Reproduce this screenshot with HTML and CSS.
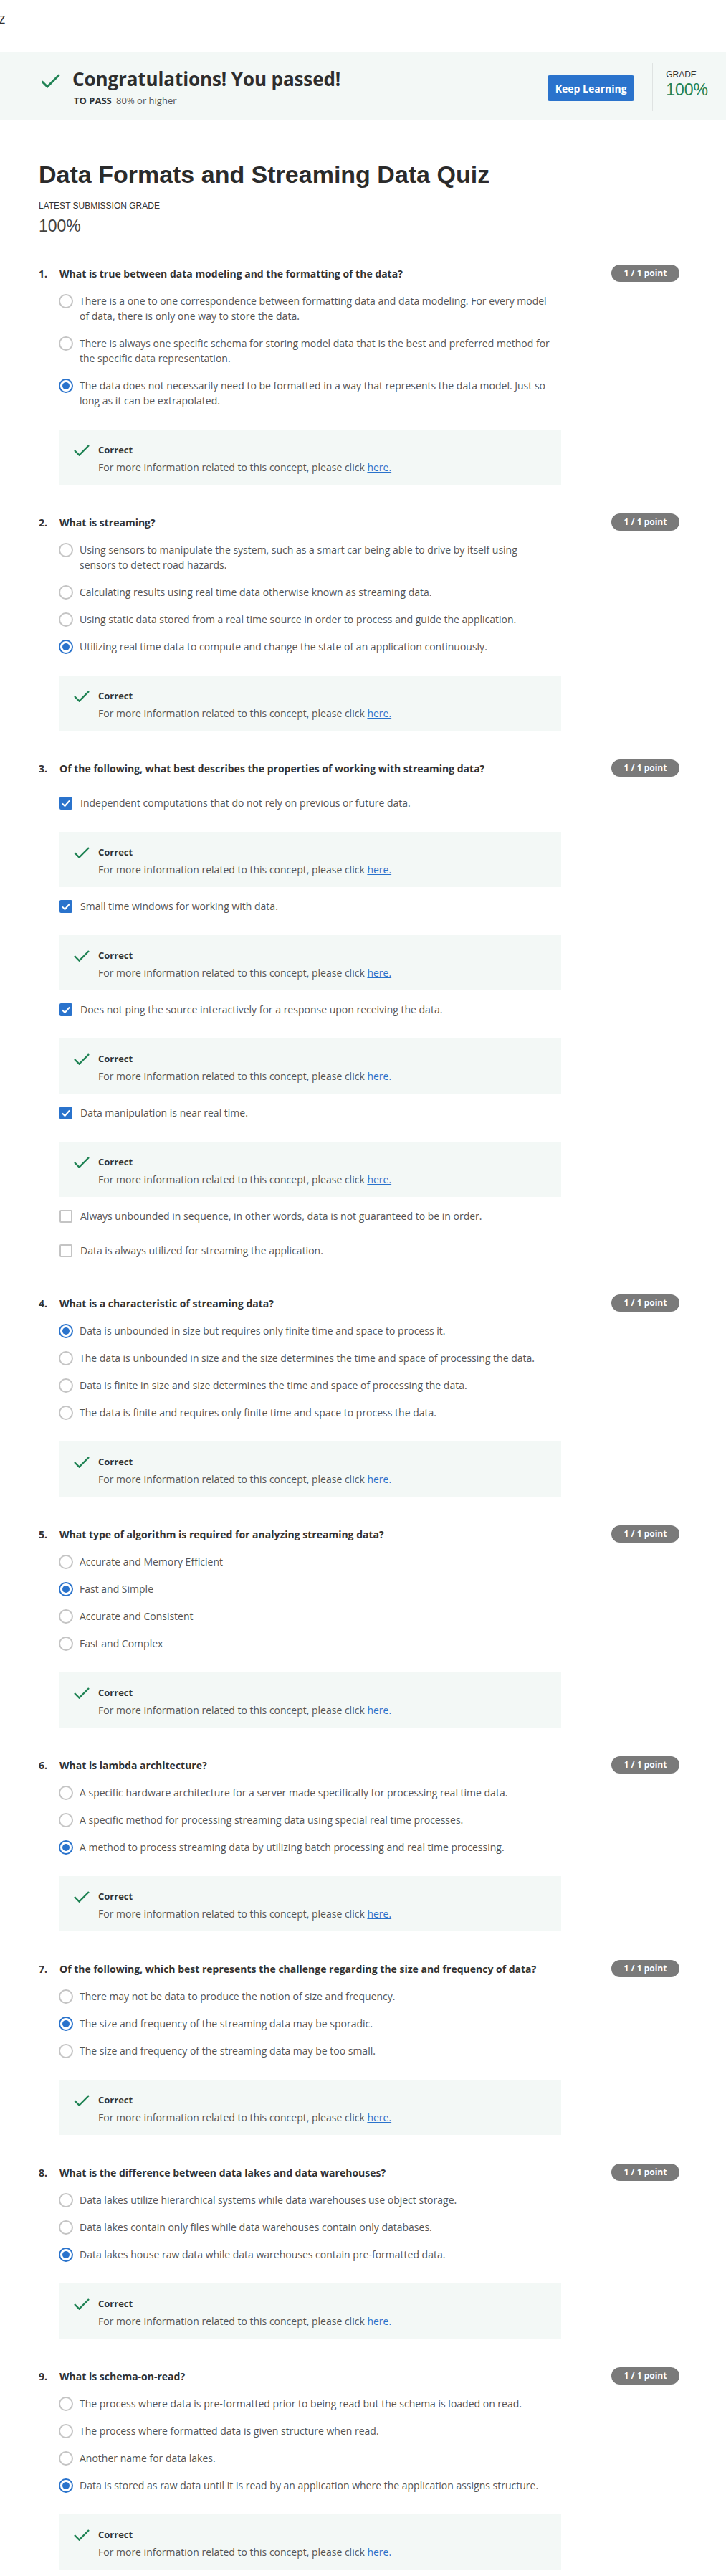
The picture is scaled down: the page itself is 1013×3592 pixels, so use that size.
FILE: index.html
```html
<!DOCTYPE html>
<html lang="en">
<head>
<meta charset="utf-8">
<title>Data Formats and Streaming Data Quiz</title>
<link rel="stylesheet" href="styles.css">
</head>
<body>
<div class="topbar"><span class="crumb">z</span></div>

<section class="banner">
  <div class="pass">
    <svg class="pass-icon" viewBox="0 0 27 20" width="27" height="20" aria-hidden="true"><polyline points="1.5,10.5 9,18 25.5,1.5" fill="none" stroke="#1f8354" stroke-width="3"/></svg>
    <div class="pass-text">
      <h2 class="pass-title">Congratulations! You passed!</h2>
      <p class="pass-req"><b>TO PASS</b> 80% or higher</p>
    </div>
  </div>
  <div class="banner-actions">
    <button class="keep" type="button">Keep Learning</button>
    <div class="grade">
      <span class="grade-label">GRADE</span>
      <span class="grade-value">100%</span>
    </div>
  </div>
</section>

<main class="content">
  <h1 class="quiz-title">Data Formats and Streaming Data Quiz</h1>
  <div class="latest-label">LATEST SUBMISSION GRADE</div>
  <div class="latest-value">100%</div>
  <hr class="divider">

  <ol class="questions">
    <li class="question">
      <div class="q-head"><span class="q-num">1.</span><span class="q-text">What is true between data modeling and the formatting of the data?</span><span class="badge">1 / 1 point</span></div>
      <div class="options">
        <div class="option"><span class="radio"></span><span class="opt-text">There is a one to one correspondence between formatting data and data modeling. For every model of data, there is only one way to store the data.</span></div>
        <div class="option"><span class="radio"></span><span class="opt-text">There is always one specific schema for storing model data that is the best and preferred method for the specific data representation.</span></div>
        <div class="option"><span class="radio on"></span><span class="opt-text">The data does not necessarily need to be formatted in a way that represents the data model. Just so long as it can be extrapolated.</span></div>
        <div class="feedback">
          <svg class="fb-icon" viewBox="0 0 22 16" width="22" height="16" aria-hidden="true"><polyline points="1,8 7.5,14.5 21,1" fill="none" stroke="#1f8354" stroke-width="2.4"/></svg>
          <div class="fb-title">Correct</div>
          <div class="fb-text">For more information related to this concept, please click <a href="#">here.</a></div>
        </div>
      </div>
    </li>

    <li class="question">
      <div class="q-head"><span class="q-num">2.</span><span class="q-text">What is streaming?</span><span class="badge">1 / 1 point</span></div>
      <div class="options">
        <div class="option"><span class="radio"></span><span class="opt-text">Using sensors to manipulate the system, such as a smart car being able to drive by itself using sensors to detect road hazards.</span></div>
        <div class="option"><span class="radio"></span><span class="opt-text">Calculating results using real time data otherwise known as streaming data.</span></div>
        <div class="option"><span class="radio"></span><span class="opt-text">Using static data stored from a real time source in order to process and guide the application.</span></div>
        <div class="option"><span class="radio on"></span><span class="opt-text">Utilizing real time data to compute and change the state of an application continuously.</span></div>
        <div class="feedback">
          <svg class="fb-icon" viewBox="0 0 22 16" width="22" height="16" aria-hidden="true"><polyline points="1,8 7.5,14.5 21,1" fill="none" stroke="#1f8354" stroke-width="2.4"/></svg>
          <div class="fb-title">Correct</div>
          <div class="fb-text">For more information related to this concept, please click <a href="#">here.</a></div>
        </div>
      </div>
    </li>

    <li class="question">
      <div class="q-head"><span class="q-num">3.</span><span class="q-text">Of the following, what best describes the properties of working with streaming data?</span><span class="badge">1 / 1 point</span></div>
      <div class="options">
        <div class="option check"><span class="checkbox on"><svg viewBox="0 0 18 18" width="18" height="18" aria-hidden="true"><polyline points="4,9.5 7.5,13 14,5.5" fill="none" stroke="#fff" stroke-width="2"/></svg></span><span class="opt-text">Independent computations that do not rely on previous or future data.</span></div>
        <div class="feedback">
          <svg class="fb-icon" viewBox="0 0 22 16" width="22" height="16" aria-hidden="true"><polyline points="1,8 7.5,14.5 21,1" fill="none" stroke="#1f8354" stroke-width="2.4"/></svg>
          <div class="fb-title">Correct</div>
          <div class="fb-text">For more information related to this concept, please click <a href="#">here.</a></div>
        </div>
        <div class="option check"><span class="checkbox on"><svg viewBox="0 0 18 18" width="18" height="18" aria-hidden="true"><polyline points="4,9.5 7.5,13 14,5.5" fill="none" stroke="#fff" stroke-width="2"/></svg></span><span class="opt-text">Small time windows for working with data.</span></div>
        <div class="feedback">
          <svg class="fb-icon" viewBox="0 0 22 16" width="22" height="16" aria-hidden="true"><polyline points="1,8 7.5,14.5 21,1" fill="none" stroke="#1f8354" stroke-width="2.4"/></svg>
          <div class="fb-title">Correct</div>
          <div class="fb-text">For more information related to this concept, please click <a href="#">here.</a></div>
        </div>
        <div class="option check"><span class="checkbox on"><svg viewBox="0 0 18 18" width="18" height="18" aria-hidden="true"><polyline points="4,9.5 7.5,13 14,5.5" fill="none" stroke="#fff" stroke-width="2"/></svg></span><span class="opt-text">Does not ping the source interactively for a response upon receiving the data.</span></div>
        <div class="feedback">
          <svg class="fb-icon" viewBox="0 0 22 16" width="22" height="16" aria-hidden="true"><polyline points="1,8 7.5,14.5 21,1" fill="none" stroke="#1f8354" stroke-width="2.4"/></svg>
          <div class="fb-title">Correct</div>
          <div class="fb-text">For more information related to this concept, please click <a href="#">here.</a></div>
        </div>
        <div class="option check"><span class="checkbox on"><svg viewBox="0 0 18 18" width="18" height="18" aria-hidden="true"><polyline points="4,9.5 7.5,13 14,5.5" fill="none" stroke="#fff" stroke-width="2"/></svg></span><span class="opt-text">Data manipulation is near real time.</span></div>
        <div class="feedback">
          <svg class="fb-icon" viewBox="0 0 22 16" width="22" height="16" aria-hidden="true"><polyline points="1,8 7.5,14.5 21,1" fill="none" stroke="#1f8354" stroke-width="2.4"/></svg>
          <div class="fb-title">Correct</div>
          <div class="fb-text">For more information related to this concept, please click <a href="#">here.</a></div>
        </div>
        <div class="option check"><span class="checkbox"></span><span class="opt-text">Always unbounded in sequence, in other words, data is not guaranteed to be in order.</span></div>
        <div class="option check"><span class="checkbox"></span><span class="opt-text">Data is always utilized for streaming the application.</span></div>
      </div>
    </li>

    <li class="question">
      <div class="q-head"><span class="q-num">4.</span><span class="q-text">What is a characteristic of streaming data?</span><span class="badge">1 / 1 point</span></div>
      <div class="options">
        <div class="option"><span class="radio on"></span><span class="opt-text">Data is unbounded in size but requires only finite time and space to process it.</span></div>
        <div class="option"><span class="radio"></span><span class="opt-text">The data is unbounded in size and the size determines the time and space of processing the data.</span></div>
        <div class="option"><span class="radio"></span><span class="opt-text">Data is finite in size and size determines the time and space of processing the data.</span></div>
        <div class="option"><span class="radio"></span><span class="opt-text">The data is finite and requires only finite time and space to process the data.</span></div>
        <div class="feedback">
          <svg class="fb-icon" viewBox="0 0 22 16" width="22" height="16" aria-hidden="true"><polyline points="1,8 7.5,14.5 21,1" fill="none" stroke="#1f8354" stroke-width="2.4"/></svg>
          <div class="fb-title">Correct</div>
          <div class="fb-text">For more information related to this concept, please click <a href="#">here.</a></div>
        </div>
      </div>
    </li>

    <li class="question">
      <div class="q-head"><span class="q-num">5.</span><span class="q-text">What type of algorithm is required for analyzing streaming data?</span><span class="badge">1 / 1 point</span></div>
      <div class="options">
        <div class="option"><span class="radio"></span><span class="opt-text">Accurate and Memory Efficient</span></div>
        <div class="option"><span class="radio on"></span><span class="opt-text">Fast and Simple</span></div>
        <div class="option"><span class="radio"></span><span class="opt-text">Accurate and Consistent</span></div>
        <div class="option"><span class="radio"></span><span class="opt-text">Fast and Complex</span></div>
        <div class="feedback">
          <svg class="fb-icon" viewBox="0 0 22 16" width="22" height="16" aria-hidden="true"><polyline points="1,8 7.5,14.5 21,1" fill="none" stroke="#1f8354" stroke-width="2.4"/></svg>
          <div class="fb-title">Correct</div>
          <div class="fb-text">For more information related to this concept, please click <a href="#">here.</a></div>
        </div>
      </div>
    </li>

    <li class="question">
      <div class="q-head"><span class="q-num">6.</span><span class="q-text">What is lambda architecture?</span><span class="badge">1 / 1 point</span></div>
      <div class="options">
        <div class="option"><span class="radio"></span><span class="opt-text">A specific hardware architecture for a server made specifically for processing real time data.</span></div>
        <div class="option"><span class="radio"></span><span class="opt-text">A specific method for processing streaming data using special real time processes.</span></div>
        <div class="option"><span class="radio on"></span><span class="opt-text">A method to process streaming data by utilizing batch processing and real time processing.</span></div>
        <div class="feedback">
          <svg class="fb-icon" viewBox="0 0 22 16" width="22" height="16" aria-hidden="true"><polyline points="1,8 7.5,14.5 21,1" fill="none" stroke="#1f8354" stroke-width="2.4"/></svg>
          <div class="fb-title">Correct</div>
          <div class="fb-text">For more information related to this concept, please click <a href="#">here.</a></div>
        </div>
      </div>
    </li>

    <li class="question">
      <div class="q-head"><span class="q-num">7.</span><span class="q-text">Of the following, which best represents the challenge regarding the size and frequency of data?</span><span class="badge">1 / 1 point</span></div>
      <div class="options">
        <div class="option"><span class="radio"></span><span class="opt-text">There may not be data to produce the notion of size and frequency.</span></div>
        <div class="option"><span class="radio on"></span><span class="opt-text">The size and frequency of the streaming data may be sporadic.</span></div>
        <div class="option"><span class="radio"></span><span class="opt-text">The size and frequency of the streaming data may be too small.</span></div>
        <div class="feedback">
          <svg class="fb-icon" viewBox="0 0 22 16" width="22" height="16" aria-hidden="true"><polyline points="1,8 7.5,14.5 21,1" fill="none" stroke="#1f8354" stroke-width="2.4"/></svg>
          <div class="fb-title">Correct</div>
          <div class="fb-text">For more information related to this concept, please click <a href="#">here.</a></div>
        </div>
      </div>
    </li>

    <li class="question">
      <div class="q-head"><span class="q-num">8.</span><span class="q-text">What is the difference between data lakes and data warehouses?</span><span class="badge">1 / 1 point</span></div>
      <div class="options">
        <div class="option"><span class="radio"></span><span class="opt-text">Data lakes utilize hierarchical systems while data warehouses use object storage.</span></div>
        <div class="option"><span class="radio"></span><span class="opt-text">Data lakes contain only files while data warehouses contain only databases.</span></div>
        <div class="option"><span class="radio on"></span><span class="opt-text">Data lakes house raw data while data warehouses contain pre-formatted data.</span></div>
        <div class="feedback">
          <svg class="fb-icon" viewBox="0 0 22 16" width="22" height="16" aria-hidden="true"><polyline points="1,8 7.5,14.5 21,1" fill="none" stroke="#1f8354" stroke-width="2.4"/></svg>
          <div class="fb-title">Correct</div>
          <div class="fb-text">For more information related to this concept, please click<a href="#"> here.</a></div>
        </div>
      </div>
    </li>

    <li class="question">
      <div class="q-head"><span class="q-num">9.</span><span class="q-text">What is schema-on-read?</span><span class="badge">1 / 1 point</span></div>
      <div class="options">
        <div class="option"><span class="radio"></span><span class="opt-text">The process where data is pre-formatted prior to being read but the schema is loaded on read.</span></div>
        <div class="option"><span class="radio"></span><span class="opt-text">The process where formatted data is given structure when read.</span></div>
        <div class="option"><span class="radio"></span><span class="opt-text">Another name for data lakes.</span></div>
        <div class="option"><span class="radio on"></span><span class="opt-text">Data is stored as raw data until it is read by an application where the application assigns structure.</span></div>
        <div class="feedback">
          <svg class="fb-icon" viewBox="0 0 22 16" width="22" height="16" aria-hidden="true"><polyline points="1,8 7.5,14.5 21,1" fill="none" stroke="#1f8354" stroke-width="2.4"/></svg>
          <div class="fb-title">Correct</div>
          <div class="fb-text">For more information related to this concept, please click<a href="#"> here.</a></div>
        </div>
      </div>
    </li>
  </ol>
</main>
</body>
</html>
```

FILE: styles.css
```css
html, body {
  margin: 0;
  padding: 0;
  background: #fff;
}

body {
  font-family: "Open Sans", "Liberation Sans", sans-serif;
  color: #333;
}

/* top bar */
.topbar {
  height: 73px;
  box-sizing: border-box;
  border-bottom: 1px solid #c9c9c9;
  padding-top: 12px;
}

.crumb {
  display: block;
  font-size: 20px;
  line-height: 28px;
  color: #333;
  margin-left: -2px;
}

/* banner */
.banner {
  display: flex;
  align-items: flex-start;
  height: 95px;
  box-sizing: border-box;
  background: #f3f8f6;
  padding: 0 25px 0 57px;
}

.pass {
  display: flex;
  align-items: flex-start;
  padding-top: 20px;
}

.pass-icon {
  flex: none;
  margin-top: 10px;
  margin-right: 17px;
}

.pass-title {
  margin: 0;
  font-size: 26px;
  line-height: 34px;
  font-weight: 700;
  color: #2e2e2e;
  letter-spacing: -0.1px;
}

.pass-req {
  margin: 4px 0 0 2px;
  font-size: 13px;
  line-height: 18px;
  color: #555;
}

.pass-req b {
  color: #333;
  margin-right: 3px;
}

.banner-actions {
  margin-left: auto;
  display: flex;
  align-items: flex-start;
  padding-top: 15px;
}

.keep {
  width: 121px;
  height: 36px;
  margin-top: 17px;
  margin-right: 25px;
  border: none;
  border-radius: 3px;
  background: #2a73cc;
  color: #fff;
  font-family: "Open Sans", sans-serif;
  font-weight: 700;
  font-size: 14px;
  padding: 0;
}

.grade {
  display: flex;
  flex-direction: column;
  height: 67px;
  box-sizing: border-box;
  border-left: 1px solid #dfe3e2;
  padding: 9px 0 0 18px;
  font-family: "Liberation Sans", Arial, sans-serif;
}

.grade-label {
  font-size: 12px;
  line-height: 14px;
  color: #333;
}

.grade-value {
  margin-top: 1px;
  font-size: 23px;
  line-height: 26px;
  color: #1f8354;
}

/* content */
.content {
  padding: 0 25px 0 54px;
}

.quiz-title {
  margin: 55px 0 0;
  font-family: "Liberation Sans", Arial, sans-serif;
  font-size: 34px;
  line-height: 40px;
  font-weight: 700;
  color: #2b2b2b;
}

.latest-label {
  margin-top: 16px;
  font-family: "Liberation Sans", Arial, sans-serif;
  font-size: 12px;
  line-height: 16px;
  color: #333;
}

.latest-value {
  margin-top: 6px;
  font-family: "Liberation Sans", Arial, sans-serif;
  font-size: 23px;
  line-height: 28px;
  color: #444;
}

.divider {
  margin: 22px 0 0;
  border: none;
  border-top: 1px solid #e2e2e2;
  height: 0;
}

/* questions */
.questions {
  list-style: none;
  margin: 17px 0 0;
  padding: 0;
}

.question {
  margin-bottom: 34px;
}

.q-head {
  display: flex;
  align-items: center;
  height: 24px;
  margin-bottom: 16px;
  padding-right: 40px;
  font-size: 14px;
  font-weight: 700;
  line-height: 21px;
  color: #333;
}

.q-num {
  flex: none;
  width: 29px;
}

.q-text {
  flex: 1;
}

.badge {
  flex: none;
  width: 95px;
  height: 24px;
  border-radius: 12px;
  background: #7a7a7a;
  color: #fff;
  font-size: 12px;
  line-height: 24px;
  font-weight: 700;
  text-align: center;
}

.options {
  display: flex;
  flex-direction: column;
  padding-left: 29px;
}

.option {
  display: flex;
  align-items: flex-start;
  margin-bottom: 17px;
  font-size: 14px;
  line-height: 21px;
  color: #555;
}

.option.check {
  padding-top: 10px;
}

.opt-text {
  max-width: 658px;
}

.radio {
  flex: none;
  width: 20px;
  height: 20px;
  box-sizing: border-box;
  border: 2px solid #c4c4c4;
  border-radius: 50%;
  margin: 0.5px 9px 0 -1px;
  display: flex;
  align-items: center;
  justify-content: center;
}

.radio.on {
  border-color: #2a73cc;
}

.radio.on::after {
  content: "";
  width: 10px;
  height: 10px;
  border-radius: 50%;
  background: #2a73cc;
}

.checkbox {
  flex: none;
  width: 18px;
  height: 18px;
  box-sizing: border-box;
  border: 2px solid #c4c4c4;
  border-radius: 2px;
  margin: 1.5px 11px 0 0;
}

.checkbox.on {
  border: none;
  background: #2a73cc;
}

.checkbox svg {
  display: block;
}

/* feedback */
.feedback {
  display: grid;
  grid-template-columns: 22px 1fr;
  column-gap: 12px;
  width: 700px;
  box-sizing: border-box;
  margin: 13px 0 6px;
  padding: 18px 20px 13px;
  background: #f3f8f6;
}

.fb-icon {
  grid-row: 1;
  grid-column: 1;
  margin-top: 3px;
}

.fb-title {
  grid-row: 1;
  grid-column: 2;
  font-size: 13px;
  line-height: 20px;
  font-weight: 700;
  color: #333;
}

.fb-text {
  grid-row: 2;
  grid-column: 2;
  margin-top: 4px;
  font-size: 14px;
  line-height: 22px;
  color: #555;
}

.fb-text a {
  color: #2a73cc;
  text-decoration: underline;
}
```
